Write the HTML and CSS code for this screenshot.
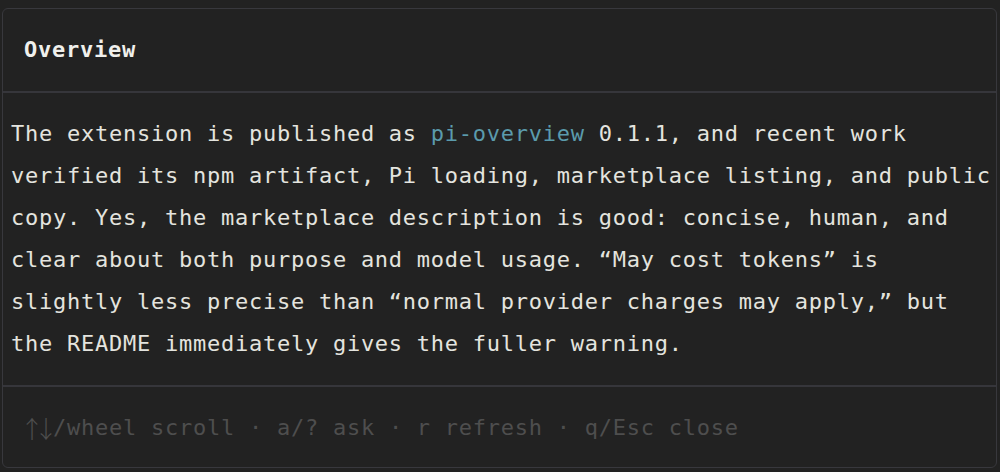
FILE: index.html
```html
<!DOCTYPE html>
<html lang="en">
<head>
<meta charset="utf-8">
<title>Overview</title>
<link rel="stylesheet" href="styles.css">
</head>
<body>
<section class="panel">
  <header class="panel-header">Overview</header>
  <div class="panel-body">
    <p class="summary">The extension is published as <span class="pkg">pi-overview</span> 0.1.1, and recent work verified its npm artifact, Pi loading, marketplace listing, and public copy. Yes, the marketplace description is good: concise, human, and clear about both purpose and model usage. “May cost tokens” is slightly less precise than “normal provider charges may apply,” but the README immediately gives the fuller warning.</p>
  </div>
  <footer class="panel-footer"><span class="arrows">↑↓</span>/wheel scroll · a/? ask · r refresh · q/Esc close</footer>
</section>
</body>
</html>
```

FILE: styles.css
```css
html, body {
  margin: 0;
  padding: 0;
  background: #222222;
}

body {
  padding: 8px 3px 0 2px;
  font-family: "DejaVu Sans Mono", "Liberation Mono", monospace;
  font-size: 22px;
  letter-spacing: 0.75px;
  line-height: 42px;
  color: #e4e4df;
}

.panel {
  border: 1px solid #38383d;
  border-radius: 6px;
  height: 460px;
  box-sizing: border-box;
  display: flex;
  flex-direction: column;
}

.panel-header {
  padding: 20px 22px 20px 21px;
  font-weight: bold;
  color: #f0f0ec;
  border-bottom: 2px solid #36363b;
}

.panel-body {
  padding: 20px 0 20px 8px;
  border-bottom: 2px solid #36363b;
}

.summary {
  margin: 0;
}

.pkg {
  color: #5b9bac;
}

.panel-footer {
  padding: 20px 22px;
  color: #4e4e4e;
}

.arrows {
  display: inline-block;
  margin: 0 5px 0 -5px;
  line-height: 42px;
  vertical-align: top;
  letter-spacing: -10px;
  color: #4e4e4e;
  font-family: "Noto Sans CJK JP", "DejaVu Sans", sans-serif;
  font-size: 24px;
  font-weight: 300;
}
```
